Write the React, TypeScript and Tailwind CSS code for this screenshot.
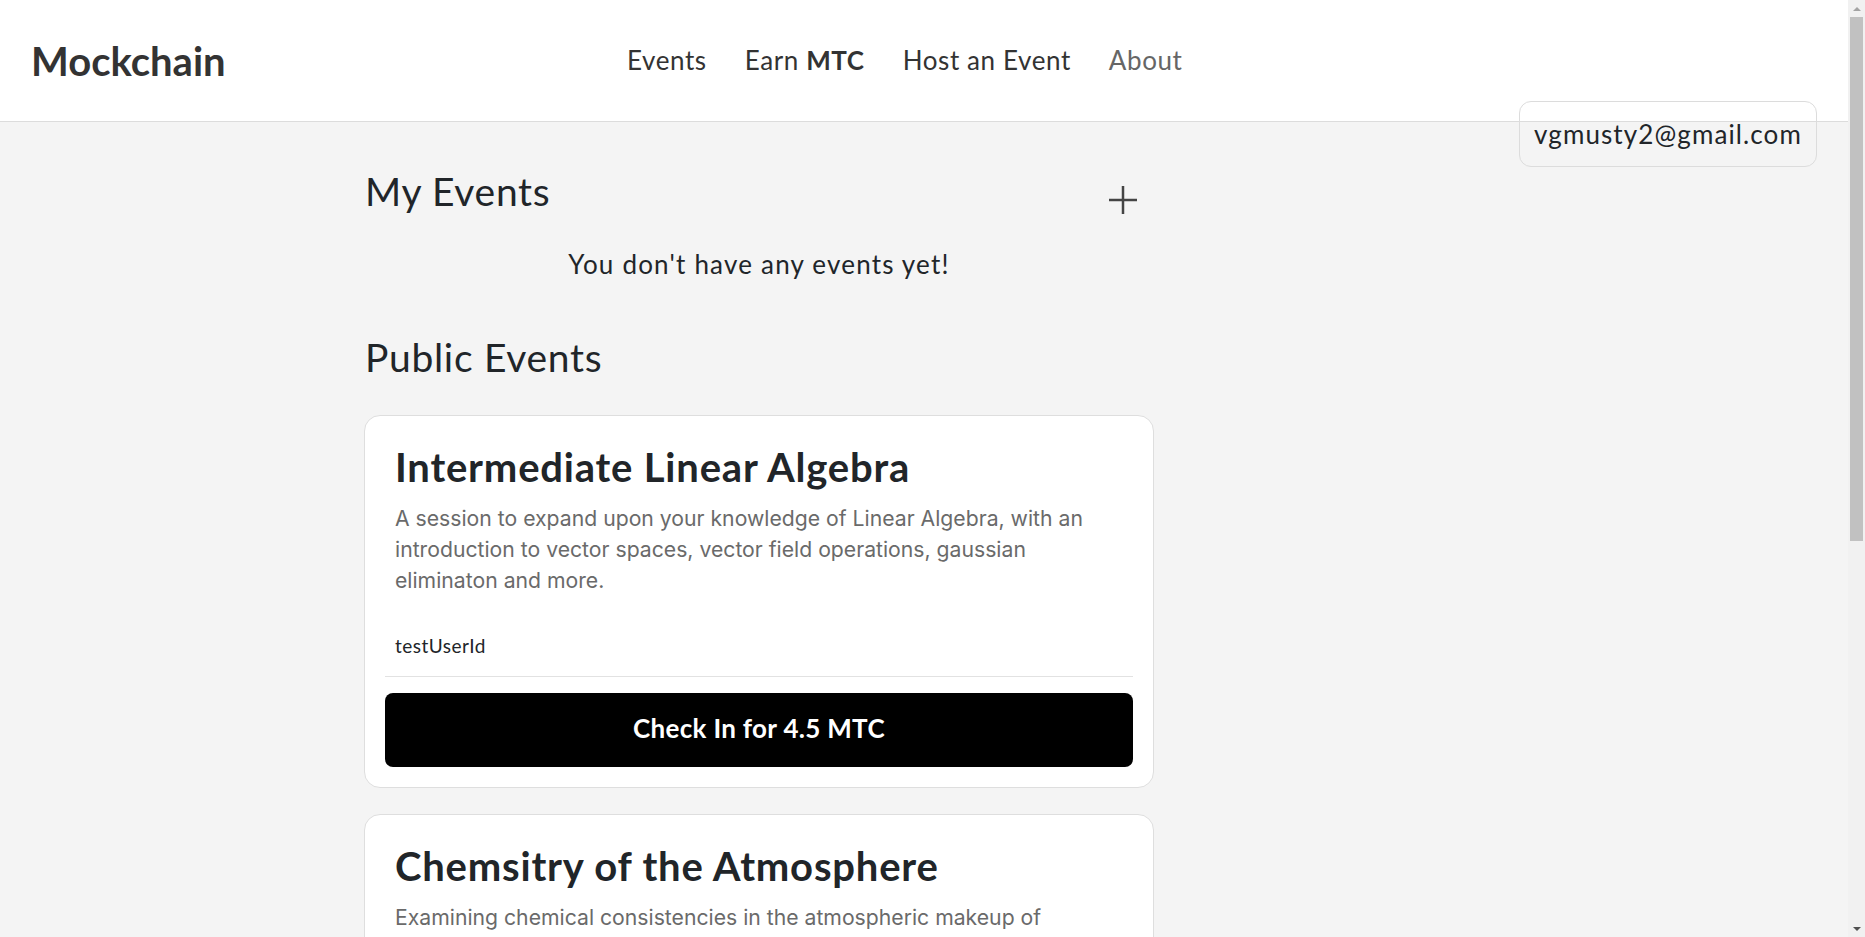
import React from "react";

const heading = "font-['Lato','Noto_Sans',sans-serif]";
const body = "font-['Inter','Noto_Sans',sans-serif]";

interface EventItem {
  title: string;
  description: string;
  host: string;
  reward: string;
}

const events: EventItem[] = [
  {
    title: "Intermediate Linear Algebra",
    description:
      "A session to expand upon your knowledge of Linear Algebra, with an introduction to vector spaces, vector field operations, gaussian eliminaton and more.",
    host: "testUserId",
    reward: "4.5",
  },
  {
    title: "Chemsitry of the Atmosphere",
    description:
      "Examining chemical consistencies in the atmospheric makeup of terrestrial planets and their climates.",
    host: "testUserId",
    reward: "3",
  },
];

const EventCard: React.FC<{ event: EventItem }> = ({ event }) => (
  <div className="rounded-2xl border border-[#dedede] bg-white p-5">
    <div className="px-[10px] pt-[6px]">
      <h3 className={`${heading} text-[40px] leading-[50px] font-bold tracking-[0.8px] text-[#212529]`}>
        {event.title}
      </h3>
      <p className={`${body} mt-[11px] text-[21.2px] leading-[31px] text-[#6a6a6a]`}>
        {event.description}
      </p>
      <div className={`${heading} mt-[38px] text-[19px] leading-[24px] tracking-[0.5px] text-[#212529]`}>
        {event.host}
      </div>
    </div>
    <div className="mt-[18px] border-t border-[#e2e2e2]" />
    <button
      className={`${heading} mt-4 flex h-[74px] w-full items-center justify-center rounded-lg bg-black pb-[3px] text-[26px] font-bold tracking-[0.3px] text-white`}
    >
      Check In for {event.reward} MTC
    </button>
  </div>
);

export default function App() {
  return (
    <div className="flex h-screen w-full overflow-hidden bg-[#f4f4f4]">
      <div className="relative flex-1 overflow-hidden">
        {/* Top bar */}
        <header className="flex h-[122px] items-center border-b border-[#dcdcdc] bg-white pl-[31px]">
          <div className={`${heading} w-[596px] text-[40px] font-bold text-[#333]`}>Mockchain</div>
          <nav className={`${heading} flex items-center gap-[38px] text-[26px] tracking-[0.6px] text-[#333]`}>
            <a>Events</a>
            <a>
              Earn <span className="font-bold">MTC</span>
            </a>
            <a>Host an Event</a>
            <a className="text-[#666]">About</a>
          </nav>
        </header>

        <div
          className={`${heading} absolute right-[31px] top-[101px] flex h-[66px] w-[298px] items-center justify-center rounded-xl border border-[#dcdcdc] text-[26px] tracking-[1.1px] text-[#212529]`}
        >
          vgmusty2@gmail.com
        </div>

        <main className="ml-[364px] w-[790px] pt-[39px]">
          <div className="flex h-[60px] items-center justify-between pl-[1px]">
            <h2 className={`${heading} text-[39px] tracking-[0.7px] text-[#212529]`}>My Events</h2>
            <button className="mr-[16px] mt-[18px] text-[#444]">
              <svg width="30" height="30" viewBox="0 0 30 30" fill="none" stroke="currentColor" strokeWidth="2.5">
                <path d="M15 1v28M1 15h28" />
              </svg>
            </button>
          </div>
          <p
            className={`${heading} mt-[23px] h-[40px] text-center text-[26px] leading-[40px] tracking-[1.2px] text-[#212529]`}
          >
            You don't have any events yet!
          </p>
          <h2
            className={`${heading} mt-[43px] h-[60px] pl-[1px] text-[39px] leading-[60px] tracking-[0.7px] text-[#212529]`}
          >
            Public Events
          </h2>
          <div className="mt-[28px] flex flex-col gap-[26px]">
            {events.map((e) => (
              <EventCard key={e.title} event={e} />
            ))}
          </div>
        </main>
      </div>

      {/* Scrollbar */}
      <div className="flex w-[17px] flex-col items-center bg-[#f1f1f1]">
        <div className="flex h-[17px] items-center justify-center">
          <div className="h-0 w-0 border-x-[4px] border-b-[4px] border-x-transparent border-b-[#a3a3a3]" />
        </div>
        <div className="h-[524px] w-[13px] bg-[#c1c1c1]" />
        <div className="flex-1" />
        <div className="flex h-[17px] items-center justify-center">
          <div className="h-0 w-0 border-x-[4px] border-t-[4px] border-x-transparent border-t-[#505050]" />
        </div>
      </div>
    </div>
  );
}
